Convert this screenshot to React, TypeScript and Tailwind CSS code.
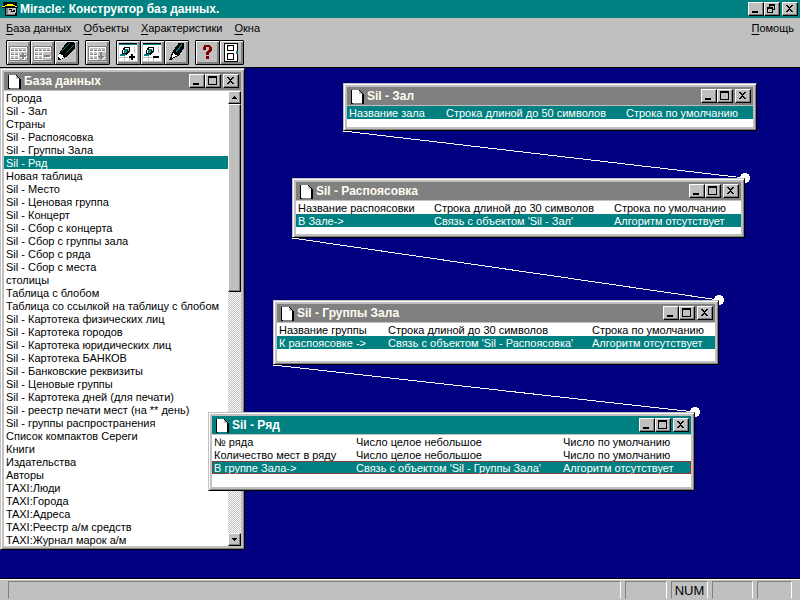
import React from 'react';

const objects = [
  'Города',
  'Sil - Зал',
  'Страны',
  'Sil - Распоясовка',
  'Sil - Группы Зала',
  'Sil - Ряд',
  'Новая таблица',
  'Sil - Место',
  'Sil - Ценовая группа',
  'Sil - Концерт',
  'Sil - Сбор с концерта',
  'Sil - Сбор с группы зала',
  'Sil - Сбор с ряда',
  'Sil - Сбор с места',
  'столицы',
  'Таблица с блобом',
  'Таблица со ссылкой на таблицу с блобом',
  'Sil - Картотека физических лиц',
  'Sil - Картотека городов',
  'Sil - Картотека юридических лиц',
  'Sil - Картотека БАНКОВ',
  'Sil - Банковские реквизиты',
  'Sil - Ценовые группы',
  'Sil - Картотека дней (для печати)',
  'Sil - реестр печати мест (на ** день)',
  'Sil - группы распространения',
  'Список компактов Сереги',
  'Книги',
  'Издательства',
  'Авторы',
  'TAXI:Люди',
  'TAXI:Города',
  'TAXI:Адреса',
  'TAXI:Реестр а/м средств',
  'TAXI:Журнал марок а/м',
];

const raised =
  'border border-t-white border-l-white border-r-black border-b-black bg-[#c0c0c0] shadow-[inset_-1px_-1px_0_#808080]';

type CaptionKind = 'min' | 'max' | 'restore' | 'close';

const captionLabels: Record<CaptionKind, string> = {
  min: 'Свернуть',
  max: 'Развернуть',
  restore: 'Восстановить',
  close: 'Закрыть',
};

function CaptionButton({ kind }: { kind: CaptionKind }) {
  return (
    <button
      type="button"
      aria-label={captionLabels[kind]}
      className={`flex h-[14px] w-4 shrink-0 items-center justify-center ${raised}`}
    >
      <svg className="h-3 w-[14px]" viewBox="0 0 14 12" shapeRendering="crispEdges" aria-hidden="true">
        {kind === 'min' && <rect x="3" y="8" width="6" height="2" />}
        {kind === 'max' && <path fillRule="evenodd" d="M2 1h9v9h-9z M3 3v6h7v-6z" />}
        {kind === 'restore' && (
          <path
            fillRule="evenodd"
            d="M4 1h6v6h-2v-1h1v-3h-4v1h-1z M2 4h6v6h-6z M3 6v3h4v-3z"
          />
        )}
        {kind === 'close' && (
          <path d="M3 2h2v1h1v1h1v-1h1v-1h2v1h-1v1h-1v1h-1v1h1v1h1v1h1v1h-2v-1h-1v-1h-1v1h-1v1h-2v-1h1v-1h1v-1h1v-1h-1v-1h-1v-1h-1z" />
        )}
      </svg>
    </button>
  );
}

function PageIcon() {
  return (
    <svg className="h-4 w-[13px] shrink-0" viewBox="0 -2 13 16" shapeRendering="crispEdges" aria-hidden="true">
      <path fill="#000" d="M0 0h1v13h-1z M8 0h1v1h1v1h1v1h1v1h1v10h-2v-1h1v-9h-4z M0 13h2v1h-2z" />
      <path fill="#fff" d="M1 0h7v4h4v9h-11z" />
      <path fill="#c0c0c0" d="M8 1h1v1h1v1h1v1h-3z" />
      <path fill="#000" d="M11 4h1v9h-1z" />
    </svg>
  );
}

function ChildWindow({
  title,
  place,
  active = false,
  children,
}: {
  title: string;
  place: string;
  active?: boolean;
  children: React.ReactNode;
}) {
  return (
    <section
      aria-label={title}
      className={`absolute border border-t-[#c0c0c0] border-l-[#c0c0c0] border-r-black border-b-black bg-[#c0c0c0] p-[3px] shadow-[inset_1px_1px_0_#fff,inset_-1px_-1px_0_#808080] ${place}`}
    >
      <header
        className={`flex h-[18px] items-center pr-[2px] pl-1 ${
          active ? 'bg-[#008080] text-white' : 'bg-[#808080] text-[#fffbf0]'
        }`}
      >
        <PageIcon />
        <h2 className="ml-[3px] flex-1 text-[12px] leading-[18px] font-bold whitespace-nowrap">{title}</h2>
        <CaptionButton kind="min" />
        <CaptionButton kind="max" />
        <span className="w-[2px]" />
        <CaptionButton kind="close" />
      </header>
      <div className="mt-px bg-white">{children}</div>
    </section>
  );
}

function FieldTable({
  rows,
  columns,
  selected,
  focused = false,
}: {
  rows: string[][];
  columns: string[];
  selected: number;
  focused?: boolean;
}) {
  return (
    <table className="w-full table-fixed border-collapse">
      <colgroup>
        {columns.map((c, i) => (
          <col key={i} className={c} />
        ))}
      </colgroup>
      <tbody>
        {rows.map((r, i) => (
          <tr key={i} className={`relative h-[13px] ${i === selected ? 'bg-[#008080] text-white' : ''}`}>
            {r.map((c, j) => (
              <td key={j} className="p-0 pt-[2px] pl-[2px] leading-[11px] whitespace-nowrap">
                {focused && i === selected && j === 0 && (
                  <span className="pointer-events-none absolute inset-0 border border-[#ff0000] [border-style:dotted_dashed]" />
                )}
                {c}
              </td>
            ))}
          </tr>
        ))}
      </tbody>
    </table>
  );
}

function GridGlyph({ mark }: { mark: 'plus' | 'minus' | 'down' }) {
  return (
    <>
      <path fill="#808080" d="M3 6h19v15h-19z" />
      <path fill="#c0c0c0" d="M4 7h17v13h-17z" />
      <path fill="#fff" d="M4 7h17v1h-17z M4 11h17v1h-17z M4 15h9v1h-9z M4 19h9v1h-9z M4 7h1v13h-1z M8 9h1v11h-1z M12 9h1v11h-1z M16 9h1v3h-1z M20 7h1v5h-1z" />
      <path fill="#808080" d="M5 10h3v1h-3z M9 10h3v1h-3z M13 10h3v1h-3z M17 10h3v1h-3z M5 14h3v1h-3z M9 14h3v1h-3z M5 18h3v1h-3z M9 18h3v1h-3z" />
      {mark === 'plus' && (
        <>
          <path fill="#fff" d="M17 14h2v6h-2z M15 16h6v2h-6z" />
          <path fill="#808080" d="M16 13h2v6h-2z M14 15h6v2h-6z" />
        </>
      )}
      {mark === 'minus' && (
        <>
          <path fill="#fff" d="M15 16h6v2h-6z" />
          <path fill="#808080" d="M14 15h6v2h-6z" />
        </>
      )}
      {mark === 'down' && (
        <>
          <path fill="#fff" d="M17 19h1v-1h1v-1h1v1h-1v1h-1v1h-1z" />
          <path fill="#808080" d="M15 12h2v4h2v1h-1v1h-1v1h-2v-1h-1v-1h-1v-1h2z" />
        </>
      )}
    </>
  );
}

function FieldGlyph({ plus = false }: { plus?: boolean }) {
  return (
    <>
      <path fill="#fff" d="M3 3h18v18h-18z" />
      <path fill="#c0c0c0" d="M8 15h1v6h-1z M13 18h1v3h-1z M3 17h9v1h-9z M18 7h1v6h-1z" />
      <path fill="#000" d="M3 3h18v1h-18z" />
      <path fill="#008080" d="M3 4h18v1h-18z" />
      <path fill="#000" d="M8 7h6v5h-1v1h-1v1h-1v1h-5v-5h1v-2h1z" />
      <path fill="#fff" d="M9 8h4v1h-4z M7 10h1v3h-1z" />
      <path fill="#008080" d="M9 9h3v1h-1v3h-3v-3h1z M4 14h6v1h-1v1h-5z" />
      <path fill="#c0c0c0" d="M12 9h1v2h-1z" />
      <path fill="#000" d="M13 16h6v2h-6z" />
      {plus && <path fill="#000" d="M15 14h2v6h-2z" />}
    </>
  );
}

function PencilGlyph() {
  return (
    <>
      <path fill="#000" d="M12 2h8v1h1v6h-1v1h-1v1h-1v1h-1v1h-1v1h-1v1h-1v1h-1v1h-2v1h-2v1h-2v1h-3v-4h1v-3h1v-2h1v-1h1v-2h1v-1h1v-2h1v-1h1v-1h1z" />
      <path
        fill="#008080"
        d="M15 3h1v1h-1v1h-1v1h-1v1h-1v1h-1v1h-1v1h-1v1h-1v-1h1v-1h1v-1h1v-1h1v-1h1v-1h1v-1h1z M19 5h1v1h-1v1h-1v1h-1v1h-1v1h-1v1h-1v1h-1v1h-1v-1h1v-1h1v-1h1v-1h1v-1h1v-1h1v-1h1z"
      />
      <path fill="#fff" d="M5 14h2v1h2v2h1v1h-2v1h-2v-1h-1v-1h-1v-2h1z" />
    </>
  );
}

function SmallPencilGlyph() {
  return (
    <>
      <path fill="#000" d="M14 3h6v6h-1v1h-1v2h-1v1h-1v2h-1v1h-2v1h-2v1h-2v1h-2v1h-1v-3h1v-3h1v-2h1v-2h1v-1h1v-2h1v-1h1v-1h1z" />
      <path fill="#008080" d="M17 4h1v2h-1v1h-1v2h-1v1h-1v1h-1v1h-1v-2h1v-1h1v-1h1v-2h1v-1h1z" />
      <path fill="#fff" d="M9 13h1v1h1v1h2v1h-2v1h-2v1h-1v-3h1z" />
      <path fill="#000" d="M5 19h3v1h-3z" />
    </>
  );
}

function HelpGlyph() {
  return (
    <path
      fill="#800000"
      d="M9 5h6v1h1v1h1v4h-1v1h-1v1h-1v2h-3v-3h1v-1h1v-1h1v-3h-3v3h-3v-3h1v-1h0z M11 16h3v3h-3z"
    />
  );
}

function DoorGlyph() {
  return (
    <>
      <path fill="#000" d="M5 3h14v19h-14z" />
      <path fill="#fff" d="M6 4h12v17h-12z" />
      <path fill="#000" fillRule="evenodd" d="M8 5h7v6h-7z M9 6v4h5v-4z M8 13h7v7h-7z M9 14v5h5v-5z" />
      <path fill="#c0c0c0" d="M9 6h2v1h-2z M9 14h2v1h-2z" />
      <path fill="#008080" d="M17 11h2v3h-2z" />
    </>
  );
}

const toolGroups: { label: string; off?: boolean; glyph: React.ReactNode }[][] = [
  [
    { label: 'Добавить таблицу', off: true, glyph: <GridGlyph mark="plus" /> },
    { label: 'Удалить таблицу', off: true, glyph: <GridGlyph mark="minus" /> },
    { label: 'Изменить таблицу', glyph: <PencilGlyph /> },
  ],
  [{ label: 'Вставить', off: true, glyph: <GridGlyph mark="down" /> }],
  [
    { label: 'Добавить поле', glyph: <FieldGlyph plus /> },
    { label: 'Удалить поле', glyph: <FieldGlyph /> },
    { label: 'Изменить поле', glyph: <SmallPencilGlyph /> },
  ],
  [
    { label: 'Справка', glyph: <HelpGlyph /> },
    { label: 'Выход', glyph: <DoorGlyph /> },
  ],
];

function MenuItem({ text }: { text: string }) {
  return (
    <button type="button" className="leading-[17px]">
      <span className="underline underline-offset-2">{text[0]}</span>
      {text.slice(1)}
    </button>
  );
}

function StatusPane({ size, children }: { size: string; children?: React.ReactNode }) {
  return (
    <div
      className={`h-[18px] border border-t-[#808080] border-r-white border-b-[#c0c0c0] border-l-[#808080] ${size}`}
    >
      {children}
    </div>
  );
}

export default function App() {
  return (
    <div className="flex h-screen flex-col overflow-hidden bg-[#c0c0c0] font-['Liberation_Sans',Arial,sans-serif] text-[11px] text-black">
      <header className="flex h-[18px] shrink-0 items-center bg-[#008080] pr-[2px] pl-[2px] text-white">
        <svg className="h-4 w-4 shrink-0" viewBox="0 0 16 16" shapeRendering="crispEdges" aria-hidden="true">
          <path fill="#000" d="M1 1h14v4h1v2h-1v8h-12v-8h-3v-2h1z" />
          <path fill="#ffff00" d="M3 4h2v-1h6v1h2v1h2v1h-2v-1h-10v1h-3v-1h3z" />
          <path fill="#808080" d="M4 7h2v6h-2z M4 13h9v1h-9z" />
          <path fill="#c0c0c0" d="M6 7h8v5h-1v1h-7z" />
          <path fill="#000" d="M7 8h3v1h-3z M9 9h4v2h-4z" />
          <path fill="#fff" d="M10 9h1v1h-1z" />
        </svg>
        <h1 className="ml-[2px] flex-1 text-[12px] leading-[18px] font-bold whitespace-nowrap">
          Miracle: Конструктор баз данных.
        </h1>
        <CaptionButton kind="min" />
        <CaptionButton kind="restore" />
        <span className="w-[2px]" />
        <CaptionButton kind="close" />
      </header>

      <nav className="flex h-[19px] shrink-0 items-center gap-3 px-[6px] pt-[2px]">
        <MenuItem text="База данных" />
        <MenuItem text="Объекты" />
        <MenuItem text="Характеристики" />
        <MenuItem text="Окна" />
        <span className="flex-1" />
        <MenuItem text="Помощь" />
      </nav>

      <div role="toolbar" className="flex shrink-0 gap-[6px] border-b border-black px-[6px] pt-[3px] pb-[2px]">
        {toolGroups.map((group, g) => (
          <div key={g} className="flex pl-px">
            {group.map((tool) => (
              <button
                key={tool.label}
                type="button"
                aria-label={tool.label}
                disabled={tool.off}
                className="-ml-px h-[25px] w-[25px] rounded-[1px] border border-black bg-[#c0c0c0] shadow-[inset_1px_1px_0_#fff,inset_-2px_-2px_0_#808080]"
              >
                <svg className="h-[23px] w-[23px]" viewBox="1 1 23 23" shapeRendering="crispEdges" aria-hidden="true">
                  {tool.glyph}
                </svg>
              </button>
            ))}
          </div>
        ))}
      </div>

      <main className="relative flex-1 overflow-hidden bg-[#000080]">
        <svg
          className="absolute top-0 left-0 h-[510px] w-[800px]"
          viewBox="0 68 800 510"
          shapeRendering="crispEdges"
          stroke="#fff"
          fill="#fff"
          aria-hidden="true"
        >
          <path d="M343 131L745 178M292 238L719 300M273 365L695 412" />
          <g stroke="none">
            <circle cx="745" cy="178" r="5" />
            <circle cx="719" cy="300" r="5" />
            <circle cx="695" cy="412" r="5" />
          </g>
        </svg>

        <ChildWindow title="База данных" place="top-0 left-0 w-[245px]">
          <div className="flex">
            <ul role="listbox" aria-label="База данных" className="flex-1">
              {objects.map((o) => (
                <li
                  key={o}
                  role="option"
                  aria-selected={o === 'Sil - Ряд'}
                  className="h-[13px] pt-[2px] pl-[2px] leading-[11px] whitespace-nowrap aria-selected:bg-[#008080] aria-selected:text-white"
                >
                  {o}
                </li>
              ))}
            </ul>
            <div className="flex w-[13px] flex-col bg-[conic-gradient(#fff_25%,#c0c0c0_0_50%,#fff_0_75%,#c0c0c0_0)] bg-[length:2px_2px]">
              <button type="button" aria-label="Вверх" className={`flex h-[13px] items-center justify-center ${raised}`}>
                <svg className="h-[3px] w-[5px]" viewBox="0 0 5 3" shapeRendering="crispEdges" aria-hidden="true">
                  <path d="M2 0h1v1h1v1h1v1h-5v-1h1v-1h1z" />
                </svg>
              </button>
              <div className={`h-[188px] ${raised}`} />
              <span className="flex-1" />
              <button type="button" aria-label="Вниз" className={`flex h-[13px] items-center justify-center ${raised}`}>
                <svg className="h-[3px] w-[5px]" viewBox="0 0 5 3" shapeRendering="crispEdges" aria-hidden="true">
                  <path d="M0 0h5v1h-1v1h-1v1h-1v-1h-1v-1h-1z" />
                </svg>
              </button>
            </div>
          </div>
        </ChildWindow>

        <ChildWindow title="Sil - Зал" place="top-[15px] left-[343px] w-[414px]">
          <div className="pb-2">
            <FieldTable
              columns={['w-[97px]', 'w-[180px]', 'w-auto']}
              selected={0}
              rows={[['Название зала', 'Строка длиной до 50 символов', 'Строка по умолчанию']]}
            />
          </div>
        </ChildWindow>

        <ChildWindow title="Sil - Распоясовка" place="top-[110px] left-[292px] w-[453px]">
          <div className="pb-[7px]">
            <FieldTable
              columns={['w-[136px]', 'w-[180px]', 'w-auto']}
              selected={1}
              rows={[
                ['Название распоясовки', 'Строка длиной до 30 символов', 'Строка по умолчанию'],
                ['В Зале->', "Связь с объектом 'Sil - Зал'", 'Алгоритм отсутствует'],
              ]}
            />
          </div>
        </ChildWindow>

        <ChildWindow title="Sil - Группы Зала" place="top-[232px] left-[273px] w-[446px]">
          <div className="pb-3">
            <FieldTable
              columns={['w-[109px]', 'w-[204px]', 'w-auto']}
              selected={1}
              rows={[
                ['Название группы', 'Строка длиной до 30 символов', 'Строка по умолчанию'],
                ['К распоясовке ->', "Связь с объектом 'Sil - Распоясовка'", 'Алгоритм отсутствует'],
              ]}
            />
          </div>
        </ChildWindow>

        <ChildWindow title="Sil - Ряд" active place="top-[344px] left-[208px] w-[487px]">
          <div className="pb-[13px]">
            <FieldTable
              columns={['w-[142px]', 'w-[207px]', 'w-auto']}
              selected={2}
              focused
              rows={[
                ['№ ряда', 'Число целое небольшое', 'Число по умолчанию'],
                ['Количество мест в ряду', 'Число целое небольшое', 'Число по умолчанию'],
                ['В группе Зала->', "Связь с объектом 'Sil - Группы Зала'", 'Алгоритм отсутствует'],
              ]}
            />
          </div>
        </ChildWindow>
      </main>

      <footer className="flex h-[22px] shrink-0 gap-1 border-t border-black pt-[2px] pr-2 pl-2 shadow-[inset_0_1px_0_#fff]">
        <StatusPane size="flex-1" />
        <StatusPane size="w-[42px]" />
        <StatusPane size="w-[37px] text-center text-[13px] leading-[17px]">NUM</StatusPane>
        <StatusPane size="w-[41px]" />
        <StatusPane size="w-[35px]" />
      </footer>
    </div>
  );
}
